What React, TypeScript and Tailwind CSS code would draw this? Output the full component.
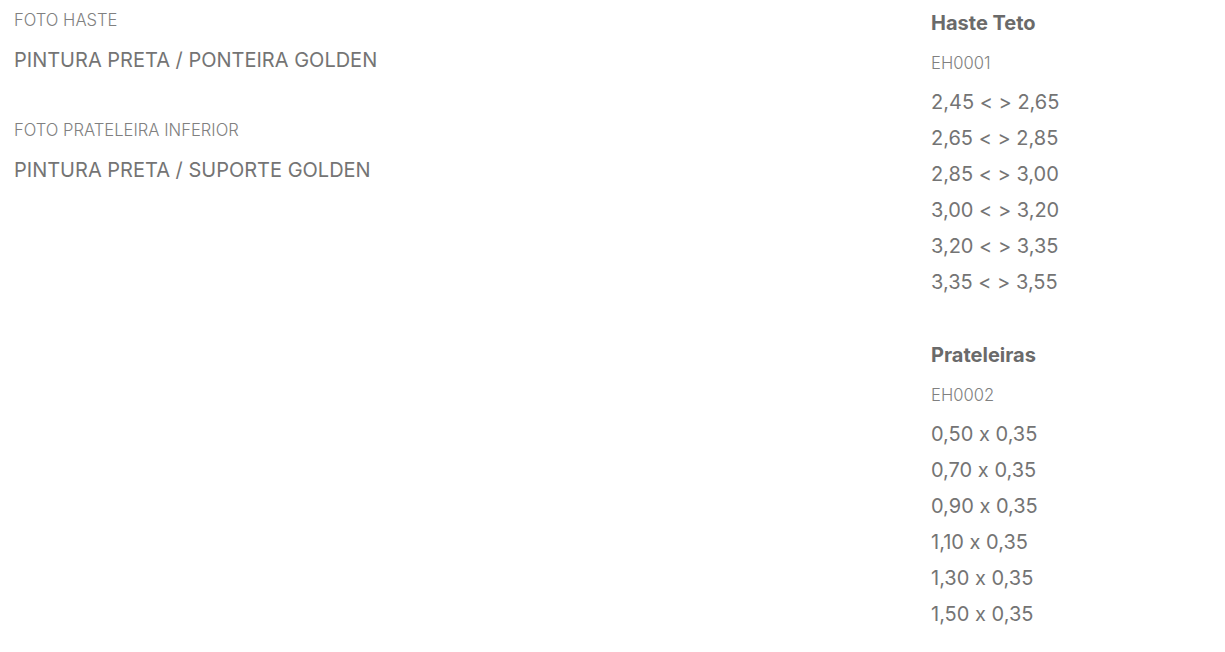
import React from 'react';

interface Group {
  title: string;
  code: string;
  sizes: string[];
}

const groups: Group[] = [
  {
    title: 'Haste Teto',
    code: 'EH0001',
    sizes: ['2,45 < > 2,65', '2,65 < > 2,85', '2,85 < > 3,00', '3,00 < > 3,20', '3,20 < > 3,35', '3,35 < > 3,55'],
  },
  {
    title: 'Prateleiras',
    code: 'EH0002',
    sizes: ['0,50 x 0,35', '0,70 x 0,35', '0,90 x 0,35', '1,10 x 0,35', '1,30 x 0,35', '1,50 x 0,35'],
  },
];

const finishes = [
  { label: 'FOTO HASTE', value: 'PINTURA PRETA / PONTEIRA GOLDEN' },
  { label: 'FOTO PRATELEIRA INFERIOR', value: 'PINTURA PRETA / SUPORTE GOLDEN' },
];

export default function App() {
  return (
    <div className="flex min-h-[652px] w-full bg-white font-['Inter',sans-serif] text-[#747474] [font-feature-settings:'calt'_0]">
      <div className="flex-1 px-[14px]">
        {finishes.map((f, i) => (
          <div key={f.label} className={i > 0 ? 'mt-[30px]' : ''}>
            <p className="text-[16.6px] font-light leading-[40px] text-[#808080]">{f.label}</p>
            <p className="text-[20px] leading-[40px]">{f.value}</p>
          </div>
        ))}
      </div>

      <div className="w-[294px] pt-[3px]">
        {groups.map((g, i) => (
          <div key={g.code} className={i > 0 ? 'mt-[35px]' : ''}>
            <h3 className="text-[20px] font-bold leading-[40px] text-[#6a6a6a]">{g.title}</h3>
            <p className="text-[16.6px] font-light leading-[40px] text-[#808080]">{g.code}</p>
            <ul className="mt-px">
              {g.sizes.map((s) => (
                <li key={s} className="text-[20px] leading-[36px]">
                  {s}
                </li>
              ))}
            </ul>
          </div>
        ))}
      </div>
    </div>
  );
}
